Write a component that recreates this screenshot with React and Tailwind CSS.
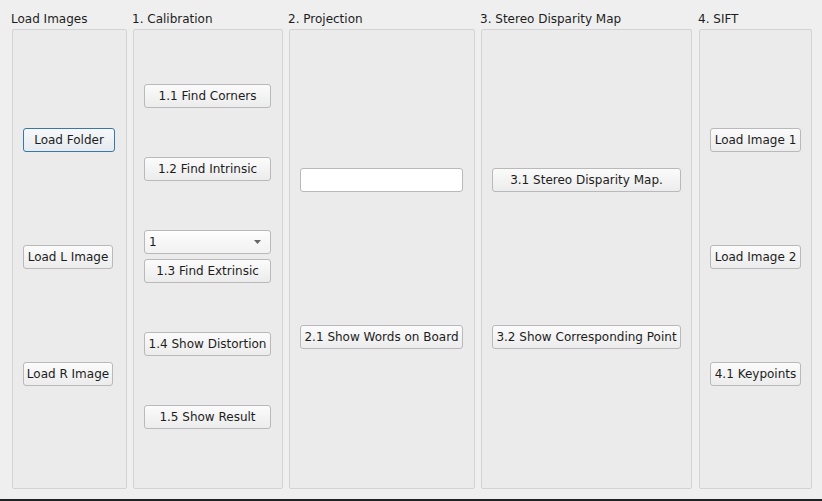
import React from 'react';

const font = { fontFamily: '"DejaVu Sans", sans-serif' };

function Btn({ children, className = '', focus = false }) {
  return (
    <button
      className={
        'h-[24px] shrink-0 rounded-[3px] border text-[12px] leading-none text-[#1d1d1d] ' +
        (focus
          ? 'border-[#3a76a8] bg-gradient-to-b from-[#f6f8fa] to-[#e6ebef] '
          : 'border-[#b9b9b9] bg-gradient-to-b from-[#fbfbfb] to-[#ececec] ') +
        className
      }
      style={font}
    >
      {children}
    </button>
  );
}

function Group({ title, className = '', children }) {
  return (
    <div className={'flex flex-col ' + className}>
      <div className="h-[17px] pt-[1px] -ml-[1px] text-[12px] leading-[17px] text-[#1d1d1d]" style={font}>{title}</div>
      <div className="mt-[2px] h-[460px] rounded-[2px] border border-[#d3d3d3] bg-[#ebebeb] pl-[10px] flex flex-col">
        {children}
      </div>
    </div>
  );
}

export default function App() {
  return (
    <div className="w-[822px] h-[501px] bg-[#efefef] flex flex-col overflow-hidden" style={font}>
      <div className="flex pt-[10px] pl-[12px] gap-[6px] h-[499px]">
        <Group title="Load Images" className="w-[115px]">
          <Btn focus className="mt-[98px] w-[92px]">Load Folder</Btn>
          <Btn className="mt-[93px] w-[90px]">Load L Image</Btn>
          <Btn className="mt-[93px] w-[90px]">Load R Image</Btn>
        </Group>
        <Group title="1. Calibration" className="w-[150px]">
          <Btn className="mt-[54px] w-[127px]">1.1 Find Corners</Btn>
          <Btn className="mt-[49px] w-[127px]">1.2 Find Intrinsic</Btn>
          <div className="mt-[49px] w-[127px] h-[24px] shrink-0 rounded-[3px] border border-[#b9b9b9] bg-gradient-to-b from-[#fdfdfd] to-[#f1f1f1] flex items-center justify-between pl-[4px] pr-[9px] text-[12px] text-[#1d1d1d]">
            <span>1</span>
            <svg width="7" height="4" viewBox="0 0 7 4"><path d="M0 0h7L3.5 4z" fill="#666666" /></svg>
          </div>
          <Btn className="mt-[5px] w-[127px]">1.3 Find Extrinsic</Btn>
          <Btn className="mt-[49px] w-[127px]">1.4 Show Distortion</Btn>
          <Btn className="mt-[49px] w-[127px]">1.5 Show Result</Btn>
        </Group>
        <Group title="2. Projection" className="w-[186px]">
          <input className="mt-[138px] w-[163px] h-[24px] shrink-0 rounded-[3px] border border-[#b9b9b9] bg-white outline-none" />
          <Btn className="mt-[133px] w-[163px]">2.1 Show Words on Board</Btn>
        </Group>
        <Group title="3. Stereo Disparity Map" className="w-[211px]">
          <Btn className="mt-[138px] w-[189px]">3.1 Stereo Disparity Map.</Btn>
          <Btn className="mt-[133px] w-[189px]">3.2 Show Corresponding Point</Btn>
        </Group>
        <Group title="4. SIFT" className="w-[113px] ml-[1px]">
          <Btn className="mt-[98px] w-[91px]">Load Image 1</Btn>
          <Btn className="mt-[93px] w-[91px]">Load Image 2</Btn>
          <Btn className="mt-[93px] w-[91px]">4.1 Keypoints</Btn>
        </Group>
      </div>
      <div className="h-[2px] bg-[#1c2525]" />
    </div>
  );
}
